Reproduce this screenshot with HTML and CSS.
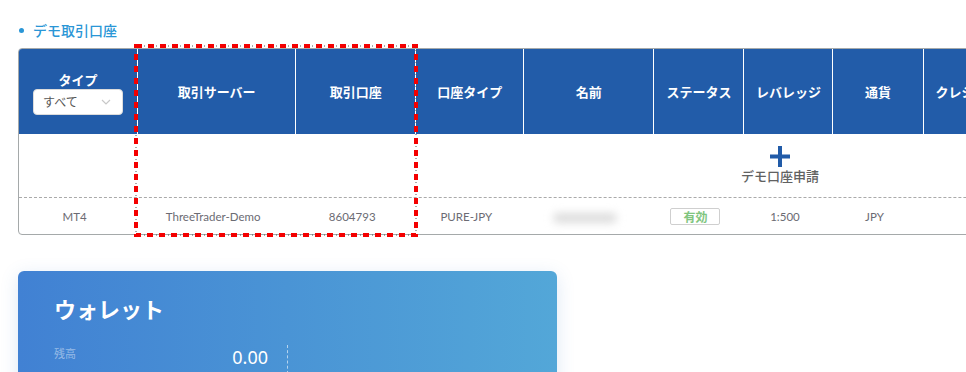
FILE: index.html
```html
<!DOCTYPE html>
<html lang="ja">
<head>
<meta charset="utf-8">
<title>デモ取引口座</title>
<link rel="stylesheet" href="styles.css">
</head>
<body>
<div class="page">
  <h2 class="section-title"><span class="bullet"></span>デモ取引口座</h2>

  <div class="table-wrap">
    <table class="accounts">
      <colgroup>
        <col class="c1"><col class="c2"><col class="c3"><col class="c4"><col class="c5">
        <col class="c6"><col class="c7"><col class="c8"><col class="c9"><col class="c10">
        <col class="c11"><col class="c12"><col class="c13"><col class="c14">
      </colgroup>
      <thead>
        <tr>
          <th>
            <div class="type-head">
              <span>タイプ</span>
              <div class="select"><span>すべて</span>
                <svg class="chev" width="10" height="6" viewBox="0 0 10 6"><path d="M1 1l4 4 4-4" fill="none" stroke="#c8c8c8" stroke-width="1.2"/></svg>
              </div>
            </div>
          </th>
          <th>取引サーバー</th>
          <th>取引口座</th>
          <th>口座タイプ</th>
          <th>名前</th>
          <th>ステータス</th>
          <th>レバレッジ</th>
          <th>通貨</th>
          <th class="shift">クレジット</th>
          <th>残高</th>
          <th>有効証拠金</th>
          <th>証拠金</th>
          <th>余剰証拠金</th>
          <th>操作</th>
        </tr>
      </thead>
      <tbody>
        <tr class="add-row">
          <td colspan="14">
            <div class="add-btn">
              <svg width="20" height="21" viewBox="0 0 20 21"><path d="M8 0h4v8.5h8v4h-8V21H8v-8.5H0v-4h8z" fill="#215ba8"/></svg>
              <span>デモ口座申請</span>
            </div>
          </td>
        </tr>
        <tr class="data-row">
          <td>MT4</td>
          <td>ThreeTrader-Demo</td>
          <td>8604793</td>
          <td>PURE-JPY</td>
          <td><span class="blur-name"></span></td>
          <td><span class="badge">有効</span></td>
          <td>1:500</td>
          <td>JPY</td>
          <td>0</td>
          <td>0</td>
          <td>0</td>
          <td>0</td>
          <td>0</td>
          <td></td>
        </tr>
      </tbody>
    </table>
  </div>

  <div class="wallet">
    <h3 class="wallet-title">ウォレット</h3>
    <div class="wallet-row">
      <div class="wallet-cell">
        <span class="wallet-label">残高</span>
        <span class="wallet-value">0.00</span>
      </div>
    </div>
  </div>
</div>

<svg class="highlight" width="284" height="193" viewBox="0 0 284 193">
  <rect x="2" y="2" width="280" height="189" fill="none" stroke="#555" stroke-width="1" stroke-dasharray="1 11" stroke-dashoffset="-8"/>
  <rect x="2" y="2" width="280" height="189" fill="none" stroke="#f40000" stroke-width="4" stroke-dasharray="6 6"/>
</svg>
</body>
</html>
```

FILE: styles.css
```css
html, body {
  margin: 0;
  padding: 0;
  overflow: hidden;
  background: #fff;
}

body {
  font-family: "Noto Sans CJK JP", "Noto Sans", sans-serif;
  color: #666;
  position: relative;
  width: 966px;
  height: 372px;
}

.page {
  padding: 20px 0 0 18px;
}

.section-title {
  margin: 0 0 8px;
  height: 20px;
  display: flex;
  align-items: center;
  font-size: 14px;
  line-height: 20px;
  font-weight: 500;
  color: #2a96d6;
}

.bullet {
  width: 5px;
  height: 5px;
  border-radius: 50%;
  background: #2a96d6;
  margin: 0 9px 0 1px;
}

.table-wrap {
  width: 1522px;
  border: 1px solid #a5a9aa;
  border-radius: 4px;
  overflow: hidden;
}

.accounts {
  width: 1522px;
  table-layout: fixed;
  border-collapse: separate;
  border-spacing: 0;
}

.c1 { width: 119px; }
.c2 { width: 158px; }
.c3 { width: 120px; }
.c4 { width: 108px; }
.c5 { width: 130px; }
.c6 { width: 90px; }
.c7 { width: 89px; }
.c8 { width: 90px; }
.c9 { width: 100px; }
.c10 { width: 100px; }
.c11 { width: 110px; }
.c12 { width: 100px; }
.c13 { width: 107px; }
.c14 { width: 100px; }

.accounts th {
  background: #225ca9;
  color: #fff;
  font-size: 13px;
  font-weight: 700;
  height: 85px;
  padding: 0;
  border-right: 1px solid #fff;
  box-sizing: border-box;
  text-align: center;
  vertical-align: middle;
  white-space: nowrap;
  overflow: hidden;
}

.accounts th.shift {
  padding-right: 10px;
}

.type-head {
  display: flex;
  flex-direction: column;
  align-items: center;
  gap: 1px;
  line-height: 16px;
  padding-top: 4px;
}

.select {
  width: 90px;
  height: 26px;
  box-sizing: border-box;
  background: #fff;
  border: 1px solid #dcdcdc;
  border-radius: 4px;
  display: flex;
  align-items: center;
  justify-content: space-between;
  padding: 0 11px 0 9px;
  color: #555;
  font-size: 12px;
  font-weight: 400;
}

.add-row td {
  height: 64px;
  padding: 0;
  box-sizing: border-box;
  border-bottom: 1px dashed #aaa;
  text-align: center;
}

.add-btn {
  display: flex;
  flex-direction: column;
  align-items: center;
  gap: 0;
  padding-top: 0;
  color: #616161;
  font-size: 13px;
  font-weight: 500;
  line-height: 18px;
}

.data-row td {
  height: 36px;
  padding: 0 8px 0 0;
  text-align: center;
  font-family: "Lato", "Noto Sans", sans-serif;
  font-size: 11.5px;
  color: #6b6b73;
  white-space: nowrap;
}

.blur-name {
  display: inline-block;
  width: 64px;
  height: 10px;
  border-radius: 5px;
  background: #dcdcdc;
  filter: blur(4px);
  vertical-align: middle;
}

.badge {
  display: inline-block;
  width: 50px;
  height: 17px;
  box-sizing: border-box;
  border: 1px solid #cfcfcf;
  border-radius: 2px;
  font-family: "Noto Sans CJK JP", sans-serif;
  font-size: 12px;
  font-weight: 700;
  line-height: 15px;
  color: #80c57e;
  vertical-align: middle;
}

.wallet {
  margin-top: 36px;
  width: 539px;
  height: 200px;
  border-radius: 6px;
  background: linear-gradient(90deg, #4181d3 0%, #4a94d5 50%, #53a7d8 100%);
  box-shadow: 0 4px 18px rgba(70, 130, 200, 0.18);
  padding: 22px 0 0 36px;
  box-sizing: border-box;
}

.wallet-title {
  margin: 0;
  font-size: 22px;
  line-height: 30px;
  font-weight: 700;
  color: #fff;
}

.wallet-row {
  margin-top: 22px;
  display: flex;
}

.wallet-cell {
  width: 234px;
  height: 60px;
  box-sizing: border-box;
  padding-right: 19px;
  border-right: 1px dashed rgba(255, 255, 255, 0.6);
  display: flex;
  justify-content: space-between;
  align-items: flex-start;
}

.wallet-label {
  font-size: 11px;
  line-height: 16px;
  color: rgba(255, 255, 255, 0.45);
}

.wallet-value {
  font-family: "Noto Sans", sans-serif;
  font-size: 18px;
  line-height: 20px;
  margin-top: 2px;
  color: #fff;
}

.highlight {
  position: absolute;
  left: 134px;
  top: 44px;
}
```
